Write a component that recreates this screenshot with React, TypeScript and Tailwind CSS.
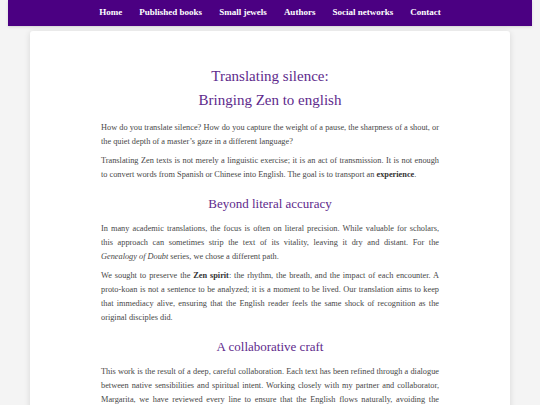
const navItems = ['Home', 'Published books', 'Small jewels', 'Authors', 'Social networks', 'Contact'];

function Heading({ children }: { children: React.ReactNode }) {
  return (
    <h2 className="text-center text-[13px] leading-[20px] text-[#5e2a8c] font-normal mt-[12px] mb-[8px]">
      {children}
    </h2>
  );
}

function Para({ children }: { children: React.ReactNode }) {
  return <p className="text-justify text-[8.3px] leading-[14px] text-[#474747] mb-[5px]">{children}</p>;
}

export default function App() {
  return (
    <div className="min-h-screen bg-[#f4f4f4] font-['Liberation_Serif',serif] overflow-hidden">
      <nav className="mx-2 h-[26px] bg-[#4b0082] flex items-center justify-center gap-[17px] text-white font-bold text-[9px] shadow-sm">
        {navItems.map((item) => (
          <a key={item} href="#" className="whitespace-nowrap">
            {item}
          </a>
        ))}
      </nav>

      <main className="mx-auto mt-[5px] w-[480px] bg-white rounded-[3px] shadow-[0_1px_6px_rgba(0,0,0,0.12)] px-[71px] pt-[34px] pb-10">
        <h1 className="text-center text-[15px] leading-[23.5px] text-[#5e2a8c] font-normal mb-[9px]">
          Translating silence:
          <br />
          Bringing Zen to english
        </h1>

        <Para>
          How do you translate silence? How do you capture the weight of a pause, the sharpness of a shout, or
          the quiet depth of a master’s gaze in a different language?
        </Para>
        <Para>
          Translating Zen texts is not merely a linguistic exercise; it is an act of transmission. It is not enough
          to convert words from Spanish or Chinese into English. The goal is to transport an{' '}
          <strong className="text-[#333]">experience</strong>.
        </Para>

        <Heading>Beyond literal accuracy</Heading>
        <Para>
          In many academic translations, the focus is often on literal precision. While valuable for scholars,
          this approach can sometimes strip the text of its vitality, leaving it dry and distant. For the{' '}
          <em className="whitespace-nowrap">Genealogy of Doubt</em> series, we chose a different path.
        </Para>
        <Para>
          We sought to preserve the <strong className="text-[#333]">Zen spirit</strong>: the rhythm, the breath, and
          the impact of each encounter. A proto-koan is not a sentence to be analyzed; it is a moment to be lived.
          Our translation aims to keep that immediacy alive, ensuring that the English reader feels the same shock
          of recognition as the original disciples did.
        </Para>

        <Heading>A collaborative craft</Heading>
        <Para>
          This work is the result of a deep, careful collaboration. Each text has been refined through a dialogue
          between native sensibilities and spiritual intent. Working closely with my partner and collaborator,
          Margarita, we have reviewed every line to ensure that the English flows naturally, avoiding the
          stiffness of “translated English.”
        </Para>
      </main>
    </div>
  );
}
